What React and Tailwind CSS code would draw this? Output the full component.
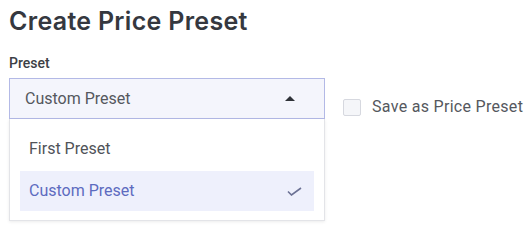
export default function App() {
  return (
    <div className="w-[527px] h-[227px] bg-white overflow-hidden" style={{ fontFamily: "Roboto, 'Liberation Sans', sans-serif" }}>
      <div className="pl-[9px] pt-[7px]">
        <h1 className="text-[25px] leading-[29px] font-semibold text-[#35383f] tracking-[0.3px]" style={{ fontFamily: "Inter, Roboto, sans-serif" }}>Create Price Preset</h1>
        <div className="mt-[17px] text-[14px] leading-[20px] font-medium text-[#3c3f45]">Preset</div>
        <div className="mt-[5px] flex items-start">
          <div className="w-[316px] flex flex-col">
            <div className="h-[41px] border border-[#b3b9e6] bg-[#f4f5fc] flex items-center justify-between pl-[15px] pr-[29px]">
              <span className="text-[16px] text-[#55585e]">Custom Preset</span>
              <svg width="10" height="5" viewBox="0 0 10 5"><path d="M0 5 L5 0 L10 5 Z" fill="#2f3238" /></svg>
            </div>
            <div className="h-[102px] border border-t-0 border-[#e3e4e8] shadow-[0_1px_3px_rgba(0,0,0,0.08)] bg-white pt-[10px] px-[10px] flex flex-col gap-[2px]">
              <div className="h-10 flex items-center pl-[9px] text-[16px] text-[#505359]">First Preset</div>
              <div className="h-10 flex items-center justify-between pl-[9px] pr-[12px] bg-[#eef0fc] text-[16px] text-[#5d6bc0]">
                <span>Custom Preset</span>
                <svg width="15" height="9" viewBox="0 0 15 9"><path d="M1 4.5 L4.5 8 L14 1" fill="none" stroke="#6b7194" strokeWidth="1.6" /></svg>
              </div>
            </div>
          </div>
          <div className="ml-[18px] mt-[17px] flex items-center gap-[11px]">
            <div className="w-[18px] h-[17px] rounded-[2px] border border-[#d6d8df] bg-[#f5f6f9]"></div>
            <span className="text-[16px] text-[#55585e] tracking-[0.3px]">Save as Price Preset</span>
          </div>
        </div>
      </div>
    </div>
  );
}
